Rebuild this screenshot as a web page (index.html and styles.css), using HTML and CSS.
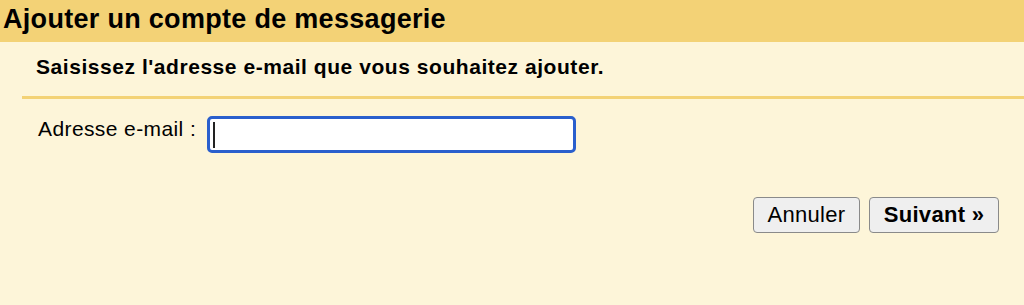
FILE: index.html
```html
<!DOCTYPE html>
<html lang="fr">
<head>
<meta charset="utf-8">
<title>Ajouter un compte de messagerie</title>
<link rel="stylesheet" href="styles.css">
</head>
<body>
<div class="page">
  <h1 class="title">Ajouter un compte de messagerie</h1>
  <div class="content">
    <div class="intro">
      <p class="subtitle">Saisissez l'adresse e-mail que vous souhaitez ajouter.</p>
    </div>
    <div class="field-row">
      <label class="label" for="email">Adresse e-mail :</label>
      <div class="input" id="email"><span class="caret"></span></div>
    </div>
    <div class="actions">
      <button class="btn btn-cancel" type="button">Annuler</button>
      <button class="btn btn-primary" type="button">Suivant »</button>
    </div>
  </div>
</div>
</body>
</html>
```
FILE: styles.css
```css
html, body {
  margin: 0;
  padding: 0;
}
body {
  background: #fdf5d9;
  font-family: "Liberation Sans", Arial, sans-serif;
  color: #000;
  width: 1024px;
  height: 305px;
  overflow: hidden;
}
.page {
  display: flex;
  flex-direction: column;
}
.title {
  margin: 0;
  height: 42px;
  box-sizing: border-box;
  padding: 4px 0 0 3px;
  background: #f3d276;
  font-size: 27px;
  font-weight: bold;
  line-height: 30px;
  letter-spacing: 0.3px;
}
.content {
  display: flex;
  flex-direction: column;
}
.intro {
  margin-left: 22px;
  border-bottom: 3px solid #f3d276;
  padding: 13px 0 17px 14px;
}
.subtitle {
  margin: 0;
  font-size: 21px;
  font-weight: bold;
  line-height: 24px;
  letter-spacing: 0.55px;
}
.field-row {
  display: flex;
  align-items: flex-start;
  margin-top: 17px;
  padding-left: 38px;
}
.label {
  font-size: 21px;
  line-height: 24px;
  margin-top: 1px;
  width: 169px;
  letter-spacing: 0.4px;
}
.input {
  width: 360px;
  height: 31px;
  border: 3px solid #2a5fcd;
  border-radius: 5px;
  background: #fff;
  display: flex;
  align-items: center;
  padding-left: 3px;
  box-sizing: content-box;
}
.caret {
  width: 2px;
  height: 26px;
  background: #222;
}
.actions {
  display: flex;
  justify-content: flex-end;
  gap: 9px;
  margin-top: 44px;
  padding-right: 25px;
}
.btn {
  font-family: "Liberation Sans", Arial, sans-serif;
  font-size: 22px;
  height: 36px;
  padding: 0;
  box-sizing: border-box;
  background: #efefef;
  border: 1px solid #8a8a8a;
  border-radius: 4px;
  color: #000;
  text-align: center;
  letter-spacing: 0.3px;
}
.btn-cancel {
  width: 107px;
}
.btn-primary {
  width: 130px;
  font-weight: bold;
}
```
